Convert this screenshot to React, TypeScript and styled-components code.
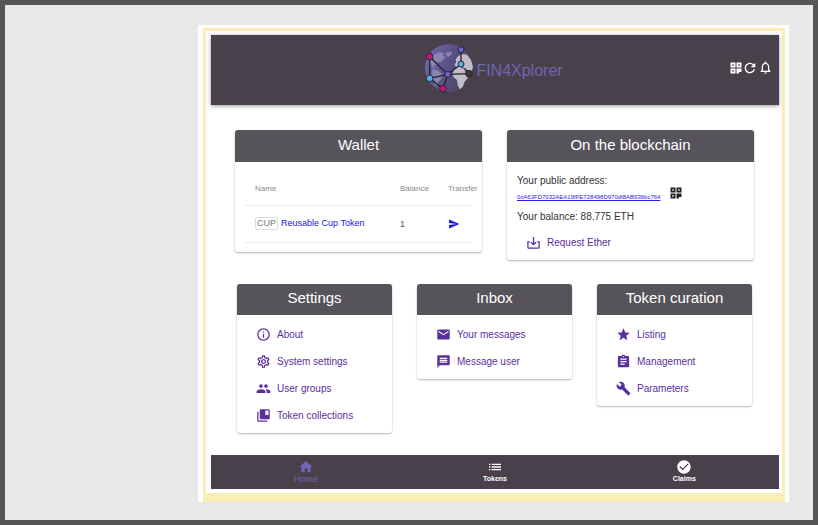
import React from "react";
import styled, { createGlobalStyle } from "styled-components";
import {
  MdAssignment,
  MdBuild,
  MdCheckCircle,
  MdCollectionsBookmark,
  MdEmail,
  MdHome,
  MdInfoOutline,
  MdList,
  MdMessage,
  MdNotificationsNone,
  MdOutlineSettings,
  MdPeople,
  MdRefresh,
  MdSend,
  MdStar,
} from "react-icons/md";
import type { IconType } from "react-icons";

const GlobalStyle = createGlobalStyle`
  *, *::before, *::after { box-sizing: border-box; }
  body { margin: 0; background: #e8e8e8; }
  button, a, table { font: inherit; }
`;

const Backdrop = styled.div`
  min-height: 100vh;
  padding: 20px 24px 18px 193px;
  border: 5px solid #565655;
  background: #e8e8e8;
  color: #333;
  font-family: "Liberation Sans", Arial, Helvetica, sans-serif;
  display: flex;
`;

const Sheet = styled.div`
  flex: 1;
  min-width: 0;
  display: flex;
  padding: 3px 4px 0 5px;
  background: #fff;
`;

const Frame = styled.div`
  flex: 1;
  min-width: 0;
  display: flex;
  flex-direction: column;
  padding: 4px 3px 4px 5px;
  border: 3px solid #fdedb4;
  border-bottom: 9px solid #faeeb4;
`;

const TopBar = styled.header`
  height: 70px;
  display: grid;
  grid-template-columns: 1fr auto 1fr;
  align-items: center;
  padding: 0 6px 0 2px;
  background: #48414b;
  box-shadow: 0 1px 4px rgba(0, 0, 0, 0.4);
`;

const Brand = styled.a`
  grid-column: 2;
  display: flex;
  align-items: center;
  gap: 1px;
  padding-top: 2px;
  color: #6f66b4;
  font-size: 16px;
  line-height: 20px;
  text-decoration: none;

  svg {
    margin-bottom: 6px;
  }
`;

const Tools = styled.div`
  display: flex;
  justify-content: flex-end;
  align-items: center;
  padding-bottom: 5px;
`;

const IconButton = styled.button<{ $color: string }>`
  display: flex;
  padding: 0;
  border: 0;
  background: none;
  color: ${(p) => p.$color};
  cursor: pointer;
`;

const Main = styled.main`
  flex: 1;
  display: flex;
  flex-direction: column;
  gap: 24px;
  padding: 25px 25px 20px 24px;
`;

const Row = styled.div<{ $columns: number; $inset?: number }>`
  display: grid;
  grid-template-columns: repeat(${(p) => p.$columns}, minmax(0, 1fr));
  align-items: start;
  gap: 25px;
  padding: 0 ${(p) => p.$inset ?? 0}px;
`;

const Card = styled.section`
  border-radius: 3px;
  background: #fff;
  box-shadow: 0 1px 2px rgba(0, 0, 0, 0.3);
`;

const CardTitle = styled.h2<{ $height: number }>`
  height: ${(p) => p.$height}px;
  margin: 0;
  padding-bottom: 4px;
  display: flex;
  align-items: center;
  justify-content: center;
  border-radius: 3px 3px 0 0;
  background: #57535a;
  color: #fff;
  font-size: 15px;
  font-weight: 400;
`;

const WalletBody = styled.div`
  padding: 11px 10px 9px;
`;

const TokenTable = styled.table`
  width: 100%;
  table-layout: fixed;
  border-collapse: collapse;
  text-align: left;
  white-space: nowrap;

  th,
  td {
    padding: 0 0 0 10px;
    border-bottom: 1px solid #ececec;
  }

  th {
    height: 32px;
    color: #8a8a8a;
    font-size: 8px;
    font-weight: 400;
  }

  td {
    height: 37px;
    color: #555;
    font-size: 9px;
  }
`;

const NameColumn = styled.col``;

const ValueColumn = styled.col<{ $width: number }>`
  width: ${(p) => p.$width}px;
`;

const Symbol = styled.span`
  display: inline-block;
  margin-right: 3px;
  padding: 0 1px;
  border: 1px solid #ddd;
  border-radius: 2px;
  color: #777;
  line-height: 11px;
`;

const TokenLink = styled.a`
  color: #1c14e0;
  text-decoration: none;
`;

const ChainBody = styled.div`
  padding: 11px 10px 4px;
  font-size: 10px;
  line-height: 16px;
`;

const Line = styled.p`
  margin: 0;
`;

const AddressRow = styled.div`
  height: 14px;
  display: flex;
  align-items: center;
  gap: 10px;
`;

const Address = styled.a`
  padding-top: 2px;
  color: #2a20e8;
  font-size: 6px;
  line-height: 8px;
`;

const RaisedIcon = styled.span`
  display: flex;
  padding-bottom: 6px;
`;

const LineAfterAddress = styled(Line)`
  padding: 6px 0 4px;
`;

const Menu = styled.ul`
  margin: 0;
  padding: 6px 10px 4px 19px;
  list-style: none;
`;

const ChainAction = styled.div`
  padding-left: 9px;
`;

const Action = styled.a`
  height: 27px;
  display: flex;
  align-items: center;
  gap: 6px;
  color: #5b2e9e;
  font-size: 10px;
  text-decoration: none;
  white-space: nowrap;

  svg {
    flex: none;
  }
`;

const BottomBar = styled.nav`
  height: 34px;
  display: grid;
  grid-template-columns: repeat(3, 1fr);
  background: #48414b;
`;

const Tab = styled.a<{ $active?: boolean }>`
  display: flex;
  flex-direction: column;
  align-items: center;
  padding-top: 4px;
  color: ${(p) => (p.$active ? "#6f66b4" : "#fff")};
  font-size: ${(p) => (p.$active ? 9 : 7)}px;
  font-weight: ${(p) => (p.$active ? 400 : 700)};
  line-height: 8px;
  text-decoration: none;
`;

const GlobeLogo = () => (
  <svg width="52" height="52" viewBox="10 10 156 156" aria-hidden="true">
    <defs>
      <linearGradient id="sea" x1="0" x2="1" y1="0.3" y2="0.6">
        <stop offset="0" stopColor="#6f68ae" />
        <stop offset="0.5" stopColor="#595183" />
        <stop offset="1" stopColor="#48414b" />
      </linearGradient>
    </defs>
    <circle cx="88" cy="88" r="72" fill="url(#sea)" />
    <path
      fill="#8984b0"
      d="M34 60 44 48l16-7 14 3-4 8 8 3-8 8-7 6-8 1-5 8-8 4 5 8-8-4-8-12zM78 42l16-3 2 7-10 9-7-5zM38 92l14 2 10 8 8 8-6 12-10 10-5 13-8-18-6-16z"
    />
    <path
      fill="#bfbdc9"
      d="M108 62l8-10 12-6 14 2 12 16 6 22-4 12-8 4-8-12-10-4-12 2-10-4-4-8 6-4zM104 92l14-6 14 4 8 14 8 4-6 14-8 8-4 14-10 8-6-12-2-16-10-8-4-10z"
    />
    <g stroke="#25212b" strokeWidth="4" fill="none">
      <path d="M30 54v65l40 31 14-43zM30 119l54-12 40-31V33M84 107l64-2" />
    </g>
    <g stroke="#2b2633" strokeWidth="3">
      <circle cx="30" cy="54" r="10" fill="#bd1a78" />
      <circle cx="70" cy="150" r="10" fill="#bd1a78" />
      <circle cx="124" cy="33" r="9" fill="#6c62d2" />
      <circle cx="84" cy="107" r="9" fill="#6c62d2" />
      <circle cx="124" cy="76" r="9" fill="#55aef0" />
      <circle cx="30" cy="119" r="10" fill="#55aef0" />
      <circle cx="148" cy="105" r="10" fill="#3b373d" />
    </g>
  </svg>
);

const QrIcon = ({ size }: { size: number }) => (
  <svg width={size} height={size} viewBox="0 0 24 24" fill="currentColor" aria-hidden="true">
    <path
      fillRule="evenodd"
      d="M1 1h10v10H1zM4.500 4.500v3h3v-3zM13 1h10v10H13zM16.500 4.500v3h3v-3zM1 13h10v10H1zM4.500 16.500v3h3v-3zM13 13h10v7h-5v3h-5z"
    />
  </svg>
);

const DownloadTrayIcon = () => (
  <svg
    width="15"
    height="15"
    viewBox="0 0 24 24"
    fill="none"
    stroke="currentColor"
    strokeWidth="2"
    aria-hidden="true"
  >
    <path d="M6 11H3v8.500a1.500 1.500 0 0 0 1.500 1.500h15a1.500 1.500 0 0 0 1.500-1.500V11h-3M12 3v12M8 11.500l4 4 4-4" />
  </svg>
);

type Entry = { label: string; icon: IconType };

const groups: { title: string; entries: Entry[] }[] = [
  {
    title: "Settings",
    entries: [
      { label: "About", icon: MdInfoOutline },
      { label: "System settings", icon: MdOutlineSettings },
      { label: "User groups", icon: MdPeople },
      { label: "Token collections", icon: MdCollectionsBookmark },
    ],
  },
  {
    title: "Inbox",
    entries: [
      { label: "Your messages", icon: MdEmail },
      { label: "Message user", icon: MdMessage },
    ],
  },
  {
    title: "Token curation",
    entries: [
      { label: "Listing", icon: MdStar },
      { label: "Management", icon: MdAssignment },
      { label: "Parameters", icon: MdBuild },
    ],
  },
];

const tabs: Entry[] = [
  { label: "Home", icon: MdHome },
  { label: "Tokens", icon: MdList },
  { label: "Claims", icon: MdCheckCircle },
];

export default function App() {
  return (
    <>
      <GlobalStyle />
      <Backdrop>
        <Sheet>
          <Frame>
            <TopBar>
              <Brand href="#home">
                <GlobeLogo />
                FIN4Xplorer
              </Brand>
              <Tools>
                <IconButton $color="#fff" aria-label="Scan QR code">
                  <QrIcon size={12} />
                </IconButton>
                <IconButton $color="#fff" aria-label="Refresh">
                  <MdRefresh size={16} />
                </IconButton>
                <IconButton $color="#fff" aria-label="Notifications">
                  <MdNotificationsNone size={15} />
                </IconButton>
              </Tools>
            </TopBar>

            <Main>
              <Row $columns={2}>
                <Card>
                  <CardTitle $height={32}>Wallet</CardTitle>
                  <WalletBody>
                    <TokenTable>
                      <colgroup>
                        <NameColumn />
                        <ValueColumn $width={48} />
                        <ValueColumn $width={34} />
                      </colgroup>
                      <thead>
                        <tr>
                          <th scope="col">Name</th>
                          <th scope="col">Balance</th>
                          <th scope="col">Transfer</th>
                        </tr>
                      </thead>
                      <tbody>
                        <tr>
                          <td>
                            <Symbol>CUP</Symbol>
                            <TokenLink href="#token">Reusable Cup Token</TokenLink>
                          </td>
                          <td>1</td>
                          <td>
                            <IconButton $color="#1c14e0" aria-label="Transfer token">
                              <MdSend size={12} />
                            </IconButton>
                          </td>
                        </tr>
                      </tbody>
                    </TokenTable>
                  </WalletBody>
                </Card>

                <Card>
                  <CardTitle $height={32}>On the blockchain</CardTitle>
                  <ChainBody>
                    <Line>Your public address:</Line>
                    <AddressRow>
                      <Address href="#address">0xA63FD7032AEA19fFE728498D970df8AB936bc764</Address>
                      <RaisedIcon>
                        <IconButton $color="#222" aria-label="Show address as QR code">
                          <QrIcon size={12} />
                        </IconButton>
                      </RaisedIcon>
                    </AddressRow>
                    <LineAfterAddress>Your balance: 88.775 ETH</LineAfterAddress>
                    <ChainAction>
                      <Action href="#request-ether">
                        <DownloadTrayIcon />
                        Request Ether
                      </Action>
                    </ChainAction>
                  </ChainBody>
                </Card>
              </Row>

              <Row $columns={3} $inset={2}>
                {groups.map((group) => (
                  <Card key={group.title}>
                    <CardTitle $height={31}>{group.title}</CardTitle>
                    <Menu>
                      {group.entries.map(({ label, icon: Icon }) => (
                        <li key={label}>
                          <Action href="#entry">
                            <Icon size={15} />
                            {label}
                          </Action>
                        </li>
                      ))}
                    </Menu>
                  </Card>
                ))}
              </Row>
            </Main>

            <BottomBar>
              {tabs.map(({ label, icon: Icon }, index) => (
                <Tab key={label} href="#tab" $active={index === 0}>
                  <Icon size={16} />
                  {label}
                </Tab>
              ))}
            </BottomBar>
          </Frame>
        </Sheet>
      </Backdrop>
    </>
  );
}
